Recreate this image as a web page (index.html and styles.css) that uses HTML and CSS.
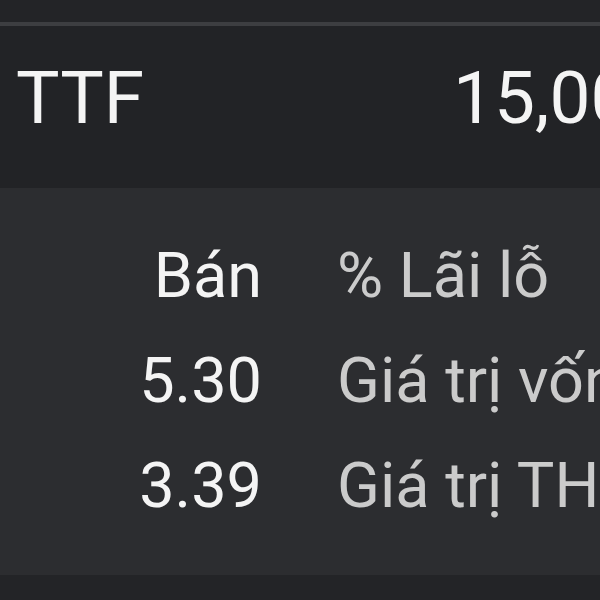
FILE: index.html
```html
<!DOCTYPE html>
<html lang="vi">
<head>
  <meta charset="UTF-8" />
  <title>TTF</title>
  <link rel="stylesheet" href="styles.css">
</head>
<body>
  <div class="thanh-tren"></div>

  <div class="dong-ma">
    <div class="ma">TTF</div>
    <div class="gia">15,000</div>
  </div>

  <div class="bang-chi-tiet">
    <div class="dong">
      <div class="so">Bán</div>
      <div class="nhan">% Lãi lỗ</div>
    </div>
    <div class="dong">
      <div class="so">5.30</div>
      <div class="nhan">Giá trị vốn</div>
    </div>
    <div class="dong">
      <div class="so">3.39</div>
      <div class="nhan">Giá trị TH</div>
    </div>
  </div>

  <div class="thanh-duoi"></div>
</body>
</html>
```

FILE: styles.css
```css
body {
  margin: 0;
  background: #232427;
  color: #f4f4f4;
  font-family: Roboto, "Noto Sans", sans-serif;
  width: 600px;
  height: 600px;
  overflow: hidden;
}

.thanh-tren {
  height: 22px;
  background: #232427;
  border-bottom: 4px solid #3d3e41;
}

.dong-ma {
  display: flex;
  align-items: flex-start;
  height: 162px;
  box-sizing: border-box;
  padding: 36px 0 0 16px;
  background: #222326;
  font-size: 73px;
  line-height: 1;
  white-space: nowrap;
  overflow: hidden;
}

.ma {
  width: 437px;
  flex-shrink: 0;
}

.gia {
  flex-shrink: 0;
}

.bang-chi-tiet {
  background: #2c2d30;
  height: 387px;
  box-sizing: border-box;
  padding-top: 35px;
  font-size: 63px;
  line-height: 105px;
  white-space: nowrap;
  overflow: hidden;
}

.dong {
  display: flex;
  gap: 75px;
}

.so {
  width: 262px;
  text-align: right;
  flex-shrink: 0;
}

.nhan {
  color: #cbcbcb;
  flex-shrink: 0;
}

.thanh-duoi {
  height: 25px;
  background: #232427;
}
```
